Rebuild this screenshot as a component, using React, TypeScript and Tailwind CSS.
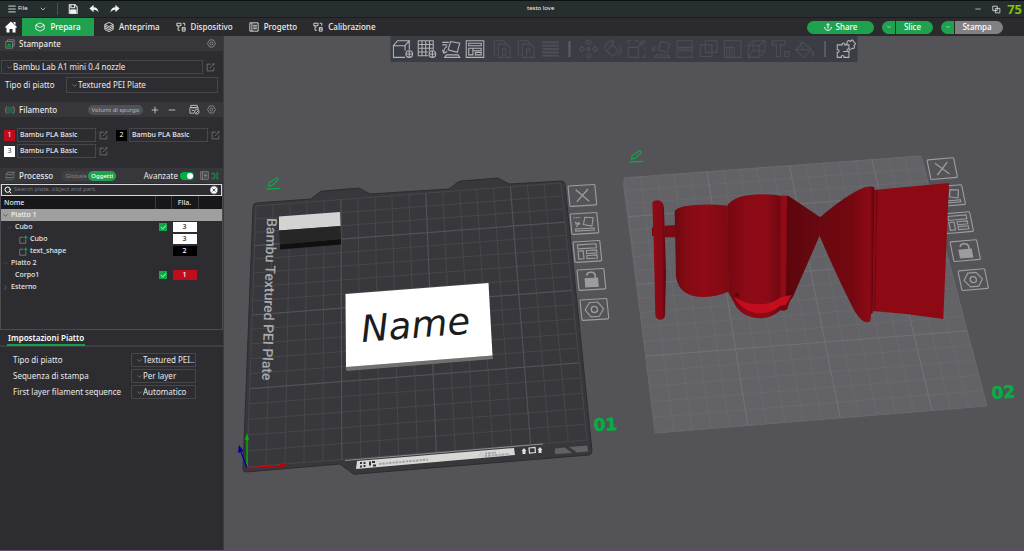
import { useState } from "react";
import type { ReactNode } from "react";
import {
  Check,
  ChevronDown,
  ChevronRight,
  CircleX,
  Menu,
  Minus,
  Plus,
  Search,
} from "lucide-react";

type Point = [number, number];

/* ---------- small icons ---------- */

const Glyph = ({ className, children }: { className: string; children: ReactNode }) => (
  <svg viewBox="0 0 24 24" fill="none" stroke="currentColor" strokeWidth="2" className={`shrink-0 ${className}`} aria-hidden="true">
    {children}
  </svg>
);

const NutIcon = ({ className }: { className: string }) => (
  <Glyph className={className}>
    <path d="M7 2.500h10L22.500 12 17 21.500H7L1.500 12z" />
    <circle cx="12" cy="12" r="4" />
  </Glyph>
);

const HomeIcon = () => (
  <Glyph className="h-3 w-3">
    <path d="M12 1L24 12l-2 2-1-1v10h-6v-7H9v7H3V13l-1 1-2-2zM17 2h4v6l-4-4z" fill="#fff" stroke="none" />
  </Glyph>
);

const SaveIcon = () => (
  <Glyph className="h-[10px] w-[10px]">
    <path d="M3 2h14l5 5v15H3z" strokeWidth="2.500" />
    <path d="M7 2v7h9V2" strokeWidth="2.500" />
    <path d="M6 14h13v8H6z" fill="currentColor" />
  </Glyph>
);

const UndoIcon = ({ className = "" }: { className?: string }) => (
  <Glyph className={`h-[10px] w-[10px] ${className}`}>
    <path d="M11 2v6c7 0 11 4 12 13-3-5-6-7-12-7v6L1 11z" fill="currentColor" stroke="none" />
  </Glyph>
);

const CubeIcon = () => (
  <Glyph className="h-[10px] w-[10px]">
    <path d="M12 2l10 5v10l-10 5L2 17V7zM2 8l10 5 10-5" />
  </Glyph>
);

const LayersIcon = () => (
  <Glyph className="h-[10px] w-[10px]">
    <path d="M12 1l10 5-10 5L2 6zM2 6v12l10 5 10-5V6M2 10l10 5 10-5M2 14l10 5 10-5" />
  </Glyph>
);

const DeviceIcon = () => (
  <Glyph className="h-[10px] w-[10px]">
    <path d="M2 3h10v6H2zM5 13v7h4M15 13h7v9h-7zM15 17h7M16 3h5v6M4 9l2 4h2" />
  </Glyph>
);

const ProjectIcon = ({ className = "h-[10px] w-[10px]" }: { className?: string }) => (
  <Glyph className={className}>
    <path d="M2 2h20v20H2zM7 2v20M10 8h9M10 12h9M10 16h9" />
  </Glyph>
);

const EditIcon = () => (
  <Glyph className="h-[9px] w-[9px] text-[#7c7c80]">
    <path d="M13 3H3v18h18v-9M10 14L21 2M17 2h4v4" />
  </Glyph>
);

const PrinterIcon = () => (
  <Glyph className="h-[10px] w-[10px] text-[#85868a]">
    <path d="M2 6h16v16H2zM6 6V2h16v15h-4" />
    <path d="M5 17h10M7 13h6" className="text-[#00ae42]" stroke="currentColor" strokeWidth="3" />
  </Glyph>
);

const SpoolIcon = () => (
  <Glyph className="h-[10px] w-[10px] text-[#85868a]">
    <path d="M4 3c-3 5-3 13 0 18M20 3c3 5 3 13 0 18" />
    <path d="M7 5h3v14H7zM14 5h3v14h-3z" className="text-[#1c8542]" stroke="currentColor" />
  </Glyph>
);

const ProcessIcon = () => (
  <Glyph className="h-[10px] w-[10px] text-[#85868a]">
    <path d="M6 3h17l-4 6H2zM2 13v3h17l4-6" />
    <path d="M2 18v3h17l4-6" className="text-[#1c8542]" stroke="currentColor" />
  </Glyph>
);

const AmsIcon = () => (
  <Glyph className="h-[11px] w-[11px] text-[#c4c4c6]">
    <path d="M4 3h14v5H4zM2 8h18v4M2 8v12h9M6 14h5" />
    <circle cx="17" cy="17" r="5" />
    <path d="M14 17l2 2 4-4" />
  </Glyph>
);

const PartIcon = () => (
  <Glyph className="h-[9px] w-[9px] text-[#8a8a8e]">
    <path d="M12 6H2v16h16V12" />
    <path d="M18 1v10M13 6h10" className="text-[#00ae42]" stroke="currentColor" strokeWidth="3" />
  </Glyph>
);

const TuneIcon = () => (
  <Glyph className="h-2 w-2 text-[#20a050]">
    <circle cx="5" cy="5" r="3" />
    <circle cx="19" cy="5" r="3" />
    <circle cx="5" cy="19" r="3" />
    <circle cx="19" cy="19" r="3" />
    <path d="M8 5h3v14H8M11 12h6M19 8v8" />
  </Glyph>
);

const ShareIcon = () => (
  <Glyph className="h-2 w-2">
    <path d="M12 17V2M7 7l5-5 5 5M2 12c0 6 4 10 10 10s10-4 10-10" strokeWidth="3" />
  </Glyph>
);

/* ---------- top bars ---------- */

const TitleBar = () => (
  <header className="relative flex h-[17px] items-center border-t border-[#0d1011] bg-[#262e30] text-[#f2f2f2]">
    <button className="ml-[7px] flex items-center gap-px text-[6px]">
      <Menu className="h-[10px] w-[10px]" strokeWidth={2} />
      File
    </button>
    <button aria-label="Altro" className="ml-[11px]">
      <ChevronDown className="h-2 w-2" />
    </button>
    <span className="mx-[10px] h-3 w-px bg-[#4b5355]" />
    <button aria-label="Salva">
      <SaveIcon />
    </button>
    <button aria-label="Annulla" className="ml-[11px]">
      <UndoIcon />
    </button>
    <button aria-label="Ripeti" className="ml-[11px]">
      <UndoIcon className="-scale-x-100" />
    </button>
    <h1 className="absolute left-1/2 ml-[15px] text-[6px]">testo love</h1>
    <div className="ml-auto flex items-center gap-[10px] pr-[23px]">
      <button aria-label="Riduci">
        <Minus className="h-2 w-2" />
      </button>
      <button aria-label="Ripristina">
        <Glyph className="h-[9px] w-[9px]">
          <path d="M2 3h12v12H2zM9 9h12v12H9z" />
        </Glyph>
      </button>
    </div>
    <span className="absolute right-[2px] top-0 z-10 font-['Noto_Sans',sans-serif] text-[13px] leading-[17px] font-bold text-[#7bc400]">75</span>
  </header>
);

const tabs = [
  { label: "Anteprima", icon: <LayersIcon /> },
  { label: "Dispositivo", icon: <DeviceIcon /> },
  { label: "Progetto", icon: <ProjectIcon /> },
  { label: "Calibrazione", icon: <DeviceIcon /> },
];

const SplitButton = ({ label, tone }: { label: string; tone: string }) => (
  <div className="flex h-[13px] gap-px text-white">
    <button aria-label={`Opzioni ${label}`} className="flex w-[13px] items-center justify-center rounded-l-full bg-[#1fa24f]">
      <ChevronDown className="h-[6px] w-[6px]" />
    </button>
    <button className={`rounded-r-full pr-1 ${tone}`}>{label}</button>
  </div>
);

const TabBar = () => (
  <nav className="flex h-[19px] items-center border-t border-[#1b1d1e] bg-[#2b2b2d] text-[8px] font-medium text-[#ededed]">
    <button aria-label="Home" className="flex w-[22px] justify-center">
      <HomeIcon />
    </button>
    <button className="flex h-full w-[72px] items-center justify-center gap-[5px] bg-[#1fa24f] text-white">
      <CubeIcon />
      Prepara
    </button>
    <div className="ml-[10px] flex gap-[16px]">
      {tabs.map((tab) => (
        <button key={tab.label} className="flex items-center gap-[5px]">
          {tab.icon}
          {tab.label}
        </button>
      ))}
    </div>
    <div className="ml-auto flex items-center gap-2 pr-[21px]">
      <button className="flex h-[13px] w-[67px] items-center justify-center gap-1 rounded-full bg-[#1fa24f] text-white">
        <ShareIcon />
        Share
      </button>
      <SplitButton label="Slice" tone="bg-[#1fa24f] w-[37px]" />
      <SplitButton label="Stampa" tone="bg-[#818184] w-[48px]" />
    </div>
  </nav>
);

/* ---------- sidebar ---------- */

const SectionHeader = ({ icon, title, children }: { icon: ReactNode; title: string; children: ReactNode }) => (
  <div className="flex h-[15px] items-center bg-[#36363b] pl-[5px] pr-[7px]">
    {icon}
    <h2 className="ml-[4px] text-[8px] font-medium">{title}</h2>
    {children}
  </div>
);

const Dropdown = ({ id, value, className = "", label }: { id: string; value: string; className?: string; label?: string }) => (
  <div className={`flex items-center border border-[#46464b] ${className}`}>
    <ChevronDown className="ml-1 h-[7px] w-[7px] shrink-0 text-[#9a9a9d]" />
    <select id={id} aria-label={label} className="min-w-0 flex-1 appearance-none bg-transparent outline-none">
      <option>{value}</option>
    </select>
  </div>
);

const filaments = [
  { id: 1, swatch: "bg-[#c00d1e] text-white" },
  { id: 2, swatch: "bg-black text-white" },
  { id: 3, swatch: "bg-white text-[#333]" },
];

const FilamentItem = ({ id, swatch }: { id: number; swatch: string }) => (
  <div className="flex h-[14px] items-center">
    <span className={`flex h-[11px] w-[11px] items-center justify-center text-[7px] ${swatch}`}>{id}</span>
    <button className="ml-[2px] h-full flex-1 border border-[#46464b] pl-[2px] text-left text-[7px] leading-3 font-medium">Bambu PLA Basic</button>
    <button aria-label={`Modifica filamento ${id}`} className="ml-[3px]">
      <EditIcon />
    </button>
  </div>
);

interface TreeRow {
  name: string;
  pad: string;
  arrow?: "open" | "closed";
  part?: boolean;
  checked?: boolean;
  selected?: boolean;
  fila?: number;
  tone?: string;
}

const rows: TreeRow[] = [
  { name: "Piatto 1", pad: "pl-px", arrow: "open", selected: true },
  { name: "Cubo", pad: "pl-[5px]", arrow: "open", checked: true, fila: 3, tone: "bg-white text-[#333]" },
  { name: "Cubo", pad: "pl-[18px]", part: true, fila: 3, tone: "bg-white text-[#333]" },
  { name: "text_shape", pad: "pl-[18px]", part: true, fila: 2, tone: "bg-black text-white" },
  { name: "Piatto 2", pad: "pl-px", arrow: "open" },
  { name: "Corpo1", pad: "pl-[14px]", checked: true, fila: 1, tone: "bg-[#c00d1e] text-white" },
  { name: "Esterno", pad: "pl-px", arrow: "closed" },
];

const ObjectTable = () => (
  <table className="w-full table-fixed border-collapse text-[7px] leading-[12px] font-medium">
    <thead>
      <tr className="h-[13px] bg-[#17171a] text-left">
        <th className="pl-[3px] font-medium">Nome</th>
        <th className="w-4 border-x border-[#3b3b40]" />
        <th className="w-[27px] border-x border-[#3b3b40] text-center font-medium">Fila.</th>
        <th className="w-6" />
      </tr>
    </thead>
    <tbody>
      {rows.map((row, i) => (
        <tr key={i} className={row.selected ? "h-[12px] bg-[#9f9f9f] text-[#f5f5f5]" : "h-[12px]"}>
          <td className="p-0">
            <div className={`flex h-[12px] items-center gap-[2px] ${row.pad}`}>
              {row.arrow === "open" && <ChevronDown className={row.selected ? "h-[7px] w-[7px] text-[#333]" : "h-[7px] w-[7px] text-[#55555a]"} />}
              {row.arrow === "closed" && <ChevronRight className="h-[7px] w-[7px] text-[#8a8a8e]" />}
              {row.part && <PartIcon />}
              {row.name}
            </div>
          </td>
          <td className="p-0">
            {row.checked && (
              <label className="mx-auto flex h-2 w-2 items-center justify-center bg-[#10a848]">
                <input type="checkbox" defaultChecked aria-label={`Stampa ${row.name}`} className="sr-only" />
                <Check className="h-[7px] w-[7px] text-white" strokeWidth={3} />
              </label>
            )}
          </td>
          <td className="p-0">
            {row.fila && <div className={`mx-auto h-[10px] w-6 text-center text-[7px] leading-[10px] ${row.tone}`}>{row.fila}</div>}
          </td>
          <td className="p-0" />
        </tr>
      ))}
    </tbody>
  </table>
);

const plateSettings = [
  { id: "plate-type", label: "Tipo di piatto", value: "Textured PEI..." },
  { id: "print-seq", label: "Sequenza di stampa", value: "Per layer" },
  { id: "first-layer", label: "First layer filament sequence", value: "Automatico" },
];

const Sidebar = () => {
  const [advanced, setAdvanced] = useState(true);

  return (
    <aside className="flex w-[224px] shrink-0 flex-col border-r border-[#3c3c41] bg-[#2d2d31] text-[8px] text-[#e9e9ea]">
      <SectionHeader icon={<PrinterIcon />} title="Stampante">
        <button aria-label="Impostazioni stampante" className="ml-auto">
          <NutIcon className="h-[9px] w-[9px] text-[#9a9a9e]" />
        </button>
      </SectionHeader>
      <div className="mt-[9px] flex items-center gap-[3px] pl-px pr-2">
        <Dropdown id="printer" label="Stampante" value="Bambu Lab A1 mini 0.4 nozzle" className="h-[14px] flex-1" />
        <button aria-label="Modifica stampante">
          <EditIcon />
        </button>
      </div>
      <div className="mt-[3px] flex items-center pl-[5px] pr-[5px]">
        <label htmlFor="bed" className="w-[61px]">Tipo di piatto</label>
        <Dropdown id="bed" value="Textured PEI Plate" className="h-[16px] flex-1" />
      </div>

      <div className="mt-[9px]">
        <SectionHeader icon={<SpoolIcon />} title="Filamento">
          <div className="ml-auto flex items-center text-[#d5d5d7]">
            <button className="h-[10px] w-[55px] rounded-full bg-[#505055] text-[6px] leading-[10px] whitespace-nowrap text-[#b5b5b9]">Volumi di spurgo</button>
            <button aria-label="Aggiungi filamento" className="ml-[7px]">
              <Plus className="h-[10px] w-[10px]" />
            </button>
            <button aria-label="Rimuovi filamento" className="ml-[7px]">
              <Minus className="h-[10px] w-[10px]" />
            </button>
            <button aria-label="Sincronizza AMS" className="ml-3">
              <AmsIcon />
            </button>
            <button aria-label="Impostazioni filamento" className="ml-[7px]">
              <NutIcon className="h-[9px] w-[9px] text-[#9a9a9e]" />
            </button>
          </div>
        </SectionHeader>
      </div>
      <div className="mt-[11px] grid grid-cols-2 gap-x-2 gap-y-[2px] pl-1 pr-[3px]">
        {filaments.map((f) => (
          <FilamentItem key={f.id} {...f} />
        ))}
      </div>

      <div className="mt-[10px]">
        <SectionHeader icon={<ProcessIcon />} title="Processo">
          <div className="ml-2 flex h-[10px] rounded-full bg-[#3e3e43] text-[6px] leading-[10px]">
            <button className="w-[27px] pl-[3px] text-[#85858a]">Globale</button>
            <button className="w-7 rounded-full bg-[#1fa24f] font-medium text-white">Oggetti</button>
          </div>
          <label className="ml-auto flex items-center gap-[2px] text-[8px]">
            Avanzate
            <input type="checkbox" checked={advanced} onChange={() => setAdvanced(!advanced)} className="peer sr-only" />
            <span className="flex h-2 w-[14px] items-center rounded-full bg-[#6b6b70] p-px peer-checked:justify-end peer-checked:bg-[#00ae42]">
              <span className="h-[6px] w-[6px] rounded-full bg-white" />
            </span>
          </label>
          <button aria-label="Confronta" className="ml-[6px]">
            <ProjectIcon className="h-[9px] w-[9px] text-[#9a9a9e]" />
          </button>
          <button aria-label="Parametri" className="-mr-[3px] ml-[2px]">
            <TuneIcon />
          </button>
        </SectionHeader>
      </div>

      <div className="mt-px border-x border-b border-[#4b4b50]">
        <div className="flex h-[12px] items-center border border-[#d8d8da] bg-[#2d2d31] px-[2px]">
          <Search className="h-2 w-2 text-white" strokeWidth={3} />
          <input
            type="text"
            aria-label="Search"
            placeholder="Search plate, object and part."
            className="ml-[2px] min-w-0 flex-1 bg-transparent text-[6px] outline-none placeholder:text-[#75757a]"
          />
          <button aria-label="Cancella ricerca">
            <CircleX className="h-[10px] w-[10px] fill-white text-[#2d2d31]" />
          </button>
        </div>
        <div className="min-h-[133px]">
          <ObjectTable />
        </div>
      </div>

      <div className="flex border-b-2 border-[#3e3e43] pl-[7px]">
        <h3 className="-mb-px border-b-2 border-[#12a04a] px-px pt-[2px] text-[8px] leading-[12px] font-semibold text-white">Impostazioni Piatto</h3>
      </div>
      <div className="mt-[6px] flex flex-col gap-[2px] pl-[13px]">
        {plateSettings.map((s) => (
          <div key={s.id} className="flex items-center">
            <label htmlFor={s.id} className="w-[118px]">{s.label}</label>
            <Dropdown id={s.id} value={s.value} className="h-[14px] w-[65px]" />
          </div>
        ))}
      </div>
    </aside>
  );
};

/* ---------- viewport toolbar ---------- */

const tools: { name: string; d: ReactNode }[][] = [
  [
    { name: "Aggiungi", d: <path d="M15 14V8H1v14h14M1 8l5-6h14l-5 6M20 2v11M24 18a4 4 0 1 1-8 0 4 4 0 0 1 8 0zM20 14v8M16 18h8" /> },
    { name: "Aggiungi piatto", d: <path d="M14 20H2V2h18v11M2 6.500h18M2 11h18M2 15.500h12M6.500 2v18M11 2v18M15.500 2v12M19 14v8M15 18h8M23 18a4 4 0 1 1-8 0 4 4 0 0 1 8 0z" /> },
    { name: "Orienta", d: <path d="M12 3l11 2-3 11-11-3zM2 4h8M2 7h6M8 9c-3 1-4 3-4 7M2 13l2 4 4-2M5 22l2-3h14l2 3z" /> },
    { name: "Disponi", d: <path d="M2 2h21v20H2zM5 5h15v3H5zM5 11h5v8H5zM10 11h10v3H10zM13 16h7v3h-7z" /> },
  ],
  [
    { name: "Dividi oggetti", d: <path d="M5 19H2V2h11l3 3M7 6h10l4 4v12H7zM12 11h4v8h-4z" /> },
    { name: "Dividi parti", d: <path d="M5 19H2V2h11l3 3M7 6h10l4 4v12H7zM12 20v-9h4v4h-4" /> },
    { name: "Altezza layer", d: <path d="M2 4h20M2 8h20M2 12h20M2 16h20M2 20h20" strokeWidth="2.500" /> },
  ],
  [
    { name: "Sposta", d: <path d="M12 1l3 3-3 3-3-3zM12 17l3 3-3 3-3-3zM4 9l3 3-3 3-3-3zM20 9l3 3-3 3-3-3zM12 10l2 2-2 2-2-2z" /> },
    { name: "Ruota", d: <path d="M12 7l7 7-7 7-7-7zM3 14C1 6 8 1 14 3M14 3l-3-2M14 3l-3 3M21 9c2 5 0 9-3 11" /> },
    { name: "Scala", d: <path d="M2 10h12v12H2zM2 6V2h4M10 2h4M18 2h4v4M22 10v4M22 18v4h-4M14 9l5-5M15 4h4v4" /> },
    { name: "Adagia", d: <path d="M12 3l11 2-3 11-11-3zM6 8l-3 5M1 10l2 4 4-1M5 22l2-3h14l2 3z" /> },
    { name: "Taglia", d: <path d="M3 2h18v8H3zM3 14h18v8H3zM1 12h22" /> },
    { name: "Booleana", d: <path d="M2 7h14v14H2zM8 2h14v14H8z" /> },
    { name: "Supporti", d: <path d="M2 2h20v20h-8V10H2zM2 10v12h12M5 10v12M8 10v12M11 10v12" /> },
    { name: "Cucitura", d: <path d="M2 8h13v14H2zM2 8l6-6h14l-7 6M22 2v13l-7 7M8 2v12M8 14L2 22M8 14h14" /> },
    { name: "Testo", d: <path d="M2 2h15v5h-5v14H7V7H2zM22 21v-6h-5v6h5" /> },
    { name: "Colore", d: <path d="M10 4l10 9-9 9-10-9zM10 13L6 2M2 13h17M22 15c2 4 1 6 0 6s-2-2 0-6z" /> },
  ],
  [
    {
      name: "Assembla",
      d: <path d="M2 7h6c-1-3 4-3 3 0h5v5c-3-1-3 4 0 3v7H10c1-3-4-3-3 0H2v-6c3 1 3-4 0-3zM9 15h7M12 7l2-2c-1-3 2-4 4-2l2-2 4 5-2 2c2 2 0 4-2 3l-4 3" />,
    },
  ],
];

const ToolGroup = ({ items, tone }: { items: { name: string; d: ReactNode }[]; tone: string }) => (
  <div className={`flex ${tone}`}>
    {items.map((tool) => (
      <button key={tool.name} aria-label={tool.name} className="flex h-6 w-6 items-center justify-center">
        <svg viewBox="0 0 25 24" fill="none" stroke="currentColor" strokeWidth="1.300" className="h-5 w-[21px]">
          {tool.d}
        </svg>
      </button>
    ))}
  </div>
);

const Toolbar = () => (
  <div className="absolute left-1/2 top-0 flex h-[26px] -translate-x-1/2 items-center bg-[#3b3d44]">
    <ToolGroup items={tools[0]} tone="text-[#b0b2b6]" />
    <span className="w-1" />
    <ToolGroup items={tools[1]} tone="text-[#4c4e55]" />
    <span className="mx-[6px] h-4 w-[2px] bg-[#5f6167]" />
    <ToolGroup items={tools[2]} tone="text-[#4c4e55]" />
    <span className="mx-2 h-4 w-px bg-[#77797e]" />
    <ToolGroup items={tools[3]} tone="text-[#b0b2b6]" />
  </div>
);

/* ---------- 3D scene ---------- */

// maps the unit square onto a perspective quad: top left, top right, bottom right, bottom left
const project = ([p0, p1, p2, p3]: Point[]) => {
  const dx1 = p1[0] - p2[0];
  const dx2 = p3[0] - p2[0];
  const dx3 = p0[0] - p1[0] + p2[0] - p3[0];
  const dy1 = p1[1] - p2[1];
  const dy2 = p3[1] - p2[1];
  const dy3 = p0[1] - p1[1] + p2[1] - p3[1];
  const det = dx1 * dy2 - dx2 * dy1;
  const g = (dx3 * dy2 - dx2 * dy3) / det;
  const h = (dx1 * dy3 - dx3 * dy1) / det;
  return (u: number, v: number) => {
    const w = g * u + h * v + 1;
    const x = ((p1[0] - p0[0] + g * p1[0]) * u + (p3[0] - p0[0] + h * p3[0]) * v + p0[0]) / w;
    const y = ((p1[1] - p0[1] + g * p1[1]) * u + (p3[1] - p0[1] + h * p3[1]) * v + p0[1]) / w;
    return `${x.toFixed(1)} ${y.toFixed(1)}`;
  };
};

const CELLS = 18;

const PlateGrid = ({ quad, thin, thick }: { quad: Point[]; thin: string; thick: string }) => {
  const at = project(quad);
  let minor = "";
  let major = "";
  for (let i = 0; i <= CELLS; i++) {
    const t = i / CELLS;
    const column = `M${at(t, 0)}L${at(t, 1)}`;
    const row = `M${at(0, 1 - t)}L${at(1, 1 - t)}`;
    if (i > 0 && i % 5 === 0) major += column + row;
    else minor += column + row;
  }
  return (
    <>
      <path d={minor} stroke={thin} strokeWidth="1" />
      <path d={major} stroke={thick} strokeWidth="1.200" />
    </>
  );
};

const plateButtons = [
  <path key="close" d="M7 4l12 12M19 4L7 16" strokeWidth="1.300" />,
  <g key="orient">
    <path d="M14 4l8 1-2 8-8-2zM4 15h18v2H4zM4 8l4 3M8 8l-3 5M4 10h5" />
    <path d="M3 4h7" strokeDasharray="1.500 0.700" />
  </g>,
  <path key="arrange" d="M4 3h18v4H4zM4 9h5v8H4zM12 9h10v3H12zM12 14h10v3H12z" />,
  <g key="lock">
    <path d="M7 9h12v8H7z" fill="#9c9ca0" />
    <path d="M17 9V6c0-4-8-4-8 0" strokeWidth="1.600" />
  </g>,
  <g key="settings">
    <path d="M9 3h8l5 7-5 7H9l-5-7z" />
    <circle cx="13" cy="10" r="3" strokeWidth="1.300" />
  </g>,
];

const PlateButtons = ({ axes, origins }: { axes: string; origins: Point[] }) => (
  <g stroke="#9c9ca0" strokeWidth="1.100" fill="none">
    {origins.map(([x, y], i) => (
      <g key={i} transform={`matrix(${axes} ${x} ${y})`}>
        <rect width="26" height="20" rx="1" />
        {plateButtons[i]}
      </g>
    ))}
  </g>
);

const EditMark = ({ x, y }: { x: number; y: number }) => (
  <g transform={`translate(${x} ${y})`} stroke="#11a646" fill="none" strokeWidth="1.300">
    <path d="M2.500 9l0.500-3 7-5q2-0.500 2 2l-6 5.500zM0.500 12l14-0.700" />
  </g>
);

const RedModel = () => (
  <g transform="translate(615 140) scale(0.3333)">
    <path d="M111 262h8v26h-8zM148 257l34-2v37h-34z" fill="#7b0912" />
    <path d="M112 190Q112 181 128 181Q145 181 147 205L153 400L150 527Q146 539 135 539Q123 537 121 525L116 300Z" fill="url(#bar)" />
    <path d="M179 214Q186 196 260 194Q310 192 338 198L341 455Q300 471 265 471Q192 470 183 410Z" fill="url(#drum)" />
    <path d="M512 167L521 168L616 232L614 287L534 470L513 500Z" fill="url(#fold)" />
    <path d="M337 196Q362 163 440 163Q480 163 497 168L516 168L513 480L530 466L517 507Q510 515 496 511Q470 535 435 535Q378 533 356 486L340 457Z" fill="url(#body)" />
    <path d="M497 168Q506 165 516 168L513 468L496 470Z" fill="#8f0b16" />
    <path d="M357 470Q390 493 435 493Q474 492 497 471L530 465L513 494L495 498Q470 520 435 520Q385 518 357 470Z" fill="#c40e1f" />
    <path d="M356 470L364 457L376 469ZM514 465L523 451L529 465Z" fill="#54060c" />
    <path d="M615 232Q700 160 750 142Q770 137 777 142L779 150L773 520L768 522L766 543Q748 558 720 515Q675 430 613 286Z" fill="url(#wing)" />
    <path d="M778 150L1002 129L985 537Q880 520 773 513Z" fill="#8d0a15" />
    <path d="M777 150l-6 368M786 150l-7 363" stroke="#5e060d" strokeWidth="2" fill="none" />
  </g>
);

const Scene = () => (
  <svg viewBox="224 36 800 514" preserveAspectRatio="xMidYMin slice" className="h-full w-full" fill="none" aria-label="Vista 3D">
    <defs>
      <linearGradient id="bar">
        <stop offset="0" stopColor="#8f0b16" />
        <stop offset="0.700" stopColor="#860a14" />
        <stop offset="1" stopColor="#5c060d" />
      </linearGradient>
      <linearGradient id="drum">
        <stop offset="0" stopColor="#6c0810" />
        <stop offset="0.200" stopColor="#840a13" />
        <stop offset="0.550" stopColor="#900b16" />
        <stop offset="1" stopColor="#7f0912" />
      </linearGradient>
      <linearGradient id="body">
        <stop offset="0" stopColor="#740811" />
        <stop offset="0.300" stopColor="#8c0a15" />
        <stop offset="0.600" stopColor="#8e0b16" />
        <stop offset="0.830" stopColor="#700811" />
      </linearGradient>
      <linearGradient id="fold">
        <stop offset="0" stopColor="#5d060d" />
        <stop offset="1" stopColor="#6a0810" />
      </linearGradient>
      <linearGradient id="wing">
        <stop offset="0" stopColor="#6a0810" />
        <stop offset="0.600" stopColor="#740811" />
        <stop offset="0.900" stopColor="#8d0a15" />
        <stop offset="1" stopColor="#5d060d" />
      </linearGradient>
    </defs>

    {/* plate 01 */}
    <path
      d="M256 203L311 199L320 192Q321 191 323 191L359 188L370 194L449 189L458 182L461 181L498 178L509 184L562 181Q564 181 565 184L592 451Q592 454 589 455L357 474Q354 475 352 473L340 464L246 472Q243 472 243 469L253 207Q253 204 256 203Z"
      fill="#38373c"
      stroke="#2d2c31"
      strokeWidth="1"
    />
    <PlateGrid quad={[[256, 206], [561, 183], [587, 440], [247, 467]]} thin="#46464b" thick="#515257" />
    <text transform="translate(267 218) rotate(91.800)" fontFamily="Roboto, sans-serif" fontSize="14" fontWeight="500" fill="#a9a9ac">
      Bambu Textured PEI Plate
    </text>
    <path d="M279 216.500L340 212L340.500 226L279 230.500Z" fill="#d3d3d3" />
    <path d="M279 230.500L340.500 226L341 239L280 244.500Z" fill="#262627" />
    <path d="M280 244.500L341 239L341 244.500L280 249.500Z" fill="#101011" />
    <path d="M345.500 367L492.500 355.500L493 359L346.500 371Z" fill="#6f716e" />
    <path d="M345.500 294L488.500 283L492.500 355.500L346 367Z" fill="#fff" />
    <text transform="translate(362 342) rotate(-4.500)" fontFamily="'DejaVu Sans', sans-serif" fontStyle="italic" fontSize="37" fill="#1b1c1c">
      Name
    </text>

    {/* front lip of the plate */}
    <path d="M345 460.500L543 444" stroke="#a5a7a7" strokeWidth="0.800" />
    <path d="M357 461L514 448L515 455L356 469Z" fill="#d6d8d6" />
    <path d="M360 462h2v2h-2zM363.500 462h2v2h-2zM360 465.500h2v2h-2zM363.500 465h2v2h-2zM369 461.500h2v4h-2zM372 461h3v2h-3zM373 464.500h3v2h-3z" fill="#333" />
    <path d="M379 464L428 459.500M485 453.500L496 452.500M485 456L509 454" stroke="#a3a5a4" strokeWidth="2" strokeDasharray="2 0.800 3 1" />
    <path d="M479 456l2.500-4 2.500 4z" stroke="#b4b6b4" strokeWidth="0.600" />
    <path d="M521.500 451l2.500-3 2.500 3h-1v3h-3v-3zM537.500 450l2.500-3 2.500 3h-1v3h-3v-3z" fill="#dfe0df" />
    <path d="M529 448l6-.5.500 5-6 .5z" stroke="#dfe0df" strokeWidth="1.200" />
    <path d="M555 448.500L565 447.500L572 453L555 454ZM569 447L587.500 445.500L588 451.500L577 452.500Z" fill="#606065" />

    <path d="M247 468L280 465.500" stroke="#d40000" strokeWidth="1.300" />
    <path d="M280 463.500L289 465L280 467.500Z" fill="#c00000" />
    <path d="M247 468L247 440" stroke="#00b600" strokeWidth="1.300" />
    <path d="M245 440L247 433L249 440Z" fill="#00b600" />
    <path d="M247 468L241 452" stroke="#00009c" strokeWidth="1.300" />
    <path d="M238 453L239 445L243.500 451Z" fill="#00009c" />

    <PlateButtons axes="1.030 -0.060 0.100 1.020" origins={[[568, 186], [570, 214], [573, 242], [577, 270], [580, 300]]} />
    <EditMark x={266} y={177} />
    <text transform="translate(594 431) rotate(-3)" fontFamily="'DejaVu Sans', sans-serif" fontWeight="bold" fontSize="17" fill="#05ad43" stroke="#05ad43" strokeWidth="0.600">
      01
    </text>

    {/* plate 02 */}
    <path d="M629 177L915 156Q921 155 923 161L987 406L660 433Q656 433 655 429L623 186Q622 178 629 177Z" fill="#626267" />
    <PlateGrid quad={[[624, 178], [921, 156], [987, 406], [655, 433]]} thin="#69696e" thick="#707075" />
    <PlateButtons axes="1.020 -0.090 0.200 0.980" origins={[[927, 160], [935, 187], [943, 214], [950, 242], [958, 271]]} />
    <RedModel />
    <EditMark x={629} y={150} />
    <text transform="translate(992 399) rotate(-4)" fontFamily="'DejaVu Sans', sans-serif" fontWeight="bold" fontSize="17" fill="#05ad43" stroke="#05ad43" strokeWidth="0.600">
      02
    </text>
  </svg>
);

const App = () => (
  <div className="flex min-h-screen flex-col border-b border-[#604d66] bg-[#2d2d31] font-['Noto_Sans',sans-serif] leading-tight">
    <TitleBar />
    <TabBar />
    <div className="flex flex-1">
      <Sidebar />
      <main className="relative min-w-0 flex-1 bg-[#545358]">
        <div className="absolute inset-0 overflow-hidden">
          <Scene />
        </div>
        <Toolbar />
      </main>
    </div>
  </div>
);

export default App;
